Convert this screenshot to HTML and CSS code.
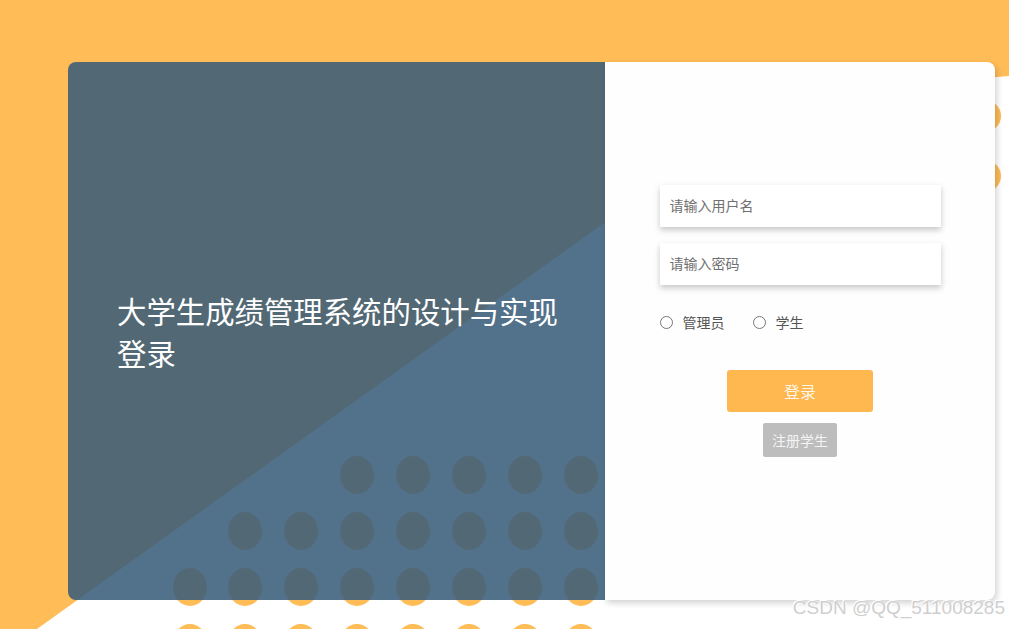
FILE: index.html
```html
<!DOCTYPE html>
<html>
<head>
<meta charset="utf-8">
<meta name="viewport" content="width=device-width, initial-scale=1">
<link rel="stylesheet" href="styles.css">
</head>
<body>

<div class="page">

  <!-- background picture: orange field, white wedge, dot grid -->
  <svg class="backdrop" width="1009" height="629" viewBox="0 0 1009 629">
    <rect x="0" y="0" width="1009" height="629" fill="#ffbc57"/>
    <polygon points="37,629 720,140 985,78 1009,76 1009,629" fill="#ffffff"/>
    <g fill="#ffbc57">
      <circle cx="985" cy="116" r="16"/>
      <circle cx="985" cy="176" r="16"/>

      <ellipse cx="357" cy="475" rx="17" ry="19"/>
      <ellipse cx="413" cy="475" rx="17" ry="19"/>
      <ellipse cx="469" cy="475" rx="17" ry="19"/>
      <ellipse cx="525" cy="475" rx="17" ry="19"/>
      <ellipse cx="581" cy="475" rx="17" ry="19"/>

      <ellipse cx="245" cy="531" rx="17" ry="19"/>
      <ellipse cx="301" cy="531" rx="17" ry="19"/>
      <ellipse cx="357" cy="531" rx="17" ry="19"/>
      <ellipse cx="413" cy="531" rx="17" ry="19"/>
      <ellipse cx="469" cy="531" rx="17" ry="19"/>
      <ellipse cx="525" cy="531" rx="17" ry="19"/>
      <ellipse cx="581" cy="531" rx="17" ry="19"/>

      <ellipse cx="190" cy="587" rx="17" ry="19"/>
      <ellipse cx="245" cy="587" rx="17" ry="19"/>
      <ellipse cx="301" cy="587" rx="17" ry="19"/>
      <ellipse cx="357" cy="587" rx="17" ry="19"/>
      <ellipse cx="413" cy="587" rx="17" ry="19"/>
      <ellipse cx="469" cy="587" rx="17" ry="19"/>
      <ellipse cx="525" cy="587" rx="17" ry="19"/>
      <ellipse cx="581" cy="587" rx="17" ry="19"/>

      <ellipse cx="190" cy="643" rx="17" ry="19"/>
      <ellipse cx="245" cy="643" rx="17" ry="19"/>
      <ellipse cx="301" cy="643" rx="17" ry="19"/>
      <ellipse cx="357" cy="643" rx="17" ry="19"/>
      <ellipse cx="413" cy="643" rx="17" ry="19"/>
      <ellipse cx="469" cy="643" rx="17" ry="19"/>
      <ellipse cx="525" cy="643" rx="17" ry="19"/>
      <ellipse cx="581" cy="643" rx="17" ry="19"/>
    </g>
  </svg>

  <div class="card">
    <div class="intro">
      <h1 class="title">大学生成绩管理系统的设计与实现登录</h1>
    </div>

    <form class="login">
      <input type="text" class="field" placeholder="请输入用户名">
      <input type="password" class="field" placeholder="请输入密码">

      <div class="roles">
        <label class="role"><input type="radio" name="role" value="admin"> 管理员</label>
        <label class="role"><input type="radio" name="role" value="student"> 学生</label>
      </div>

      <button type="button" class="btn-login">登录</button>
      <button type="button" class="btn-register">注册学生</button>
    </form>
  </div>

  <div class="watermark">CSDN @QQ_511008285</div>
</div>

</body>
</html>
```

FILE: styles.css
```css
html, body {
  margin: 0;
  padding: 0;
}

body {
  font-family: "Noto Sans CJK SC", "Liberation Sans", sans-serif;
  background-color: #ffbc57;
}

.page {
  position: relative;
  width: 1009px;
  height: 629px;
  overflow: hidden;
  padding: 62px 0 0 68px;
  box-sizing: border-box;
}

/* picture behind the card */
.backdrop {
  position: absolute;
  left: 0;
  top: 0;
  z-index: 0;
}

/* The card with its two halves */
.card {
  position: relative;
  z-index: 1;
  display: flex;
  width: 927px;
  height: 538px;
}

.intro {
  width: 537px;
  display: flex;
  align-items: center;
  padding: 0 40px 0 49px;
  box-sizing: border-box;
  background-color: rgba(58, 93, 122, 0.88);
  border-radius: 8px 0 0 8px;
}

.title {
  margin: 0;
  color: #ffffff;
  font-size: 29.4px;
  font-weight: normal;
  line-height: 42px;
}

.login {
  flex: 1;
  display: flex;
  flex-direction: column;
  align-items: center;
  padding-top: 123px;
  background-color: #fefefe;
  border-radius: 0 8px 8px 0;
  box-shadow: 2px 3px 6px rgba(0, 0, 0, 0.18);
}

/* Inputs */
.field {
  width: 281px;
  height: 42px;
  margin: 0 0 16px 0;
  padding: 0 10px 2px;
  box-sizing: border-box;
  border: none;
  outline: none;
  background: #ffffff;
  box-shadow: 0 3px 6px rgba(0, 0, 0, 0.22);
  font-family: inherit;
  font-size: 14px;
  color: #333;
}

.field::placeholder {
  color: #707070;
}

/* role radios */
.roles {
  width: 281px;
  display: flex;
  gap: 28px;
  margin-top: 13px;
}

.role {
  display: flex;
  align-items: center;
  gap: 10px;
  font-size: 14px;
  color: #555;
  line-height: 16px;
}

.role input {
  appearance: none;
  -webkit-appearance: none;
  width: 13px;
  height: 13px;
  margin: 0;
  border: 1px solid #777;
  border-radius: 50%;
  background: #fff;
}

/* Buttons */
.btn-login {
  margin-top: 40px;
  width: 146px;
  height: 42px;
  border: none;
  border-radius: 3px;
  background-color: #ffb74f;
  color: rgba(255, 255, 255, 0.88);
  font-family: inherit;
  font-size: 16px;
  cursor: pointer;
}

.btn-register {
  margin-top: 11px;
  height: 34px;
  padding: 0 9px;
  border: none;
  border-radius: 2px;
  background-color: #bdbdbd;
  color: #f4f4f4;
  font-family: inherit;
  font-size: 14px;
  cursor: pointer;
}

/* site stamp over the picture */
.watermark {
  position: absolute;
  right: 4px;
  top: 597px;
  z-index: 2;
  font-family: "Liberation Sans", Arial, sans-serif;
  font-size: 19px;
  color: #cfcfcf;
  text-shadow: 1px 1px 0 #ffffff, -1px -1px 0 #ffffff;
}
```
